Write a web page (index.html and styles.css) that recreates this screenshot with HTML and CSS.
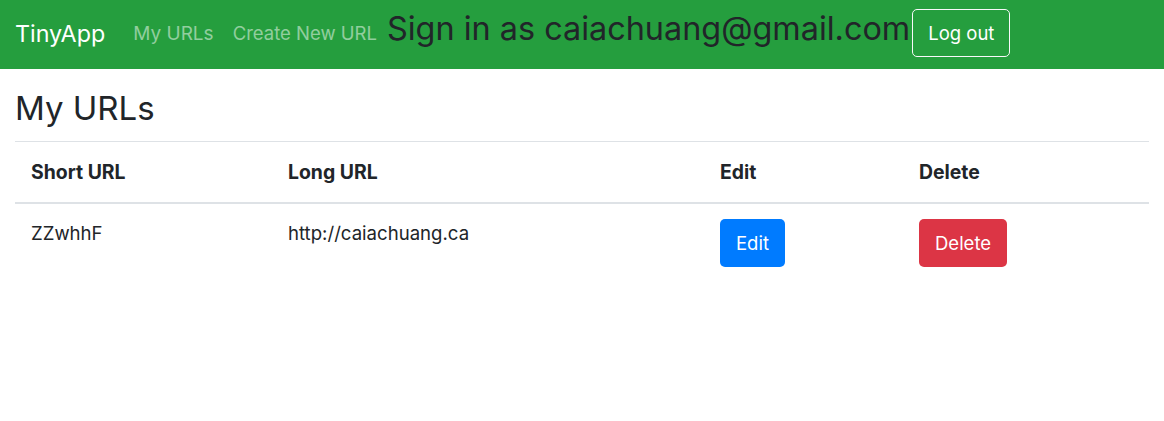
FILE: index.html
```html
<!DOCTYPE html>
<html lang="en">
<head>
<meta charset="utf-8">
<title>TinyApp</title>
<link rel="stylesheet" href="styles.css">
</head>
<body>
<nav class="navbar">
  <a class="brand" href="#">TinyApp</a>
  <a class="nav-link" href="#">My URLs</a>
  <a class="nav-link" href="#">Create New URL</a>
  <h2 class="signin">Sign in as caiachuang@gmail.com</h2>
  <button class="btn-logout">Log out</button>
</nav>
<main class="content">
  <h1 class="title">My URLs</h1>
  <table class="table">
    <thead>
      <tr>
        <th class="c1">Short URL</th>
        <th class="c2">Long URL</th>
        <th class="c3">Edit</th>
        <th class="c4">Delete</th>
      </tr>
    </thead>
    <tbody>
      <tr>
        <td>ZZwhhF</td>
        <td>http://caiachuang.ca</td>
        <td><button class="btn btn-edit">Edit</button></td>
        <td><button class="btn btn-delete">Delete</button></td>
      </tr>
    </tbody>
  </table>
</main>
</body>
</html>
```
FILE: styles.css
```css
* { box-sizing: border-box; }
body {
  margin: 0;
  font-family: Inter, "Liberation Sans", sans-serif;
  color: #212529;
  background: #fff;
}
.navbar {
  display: flex;
  align-items: center;
  padding: 9px 16px 12px;
  background: #259e3e;
}
.brand {
  font-size: 23.3px;
  color: #fff;
  text-decoration: none;
  margin-right: 28px;
  margin-left: -1px;
}
.nav-link {
  font-size: 19px;
  color: rgba(255,255,255,.5);
  text-decoration: none;
  margin-right: 19px;
}
.nav-link + .nav-link { font-size: 18.5px; margin-right: 10px; }
.signin {
  margin: 0 0 8px;
  font-size: 32.4px;
  font-weight: 400;
  color: #212529;
  line-height: 1.2;
}
.btn-logout {
  margin-left: 2px;
  height: 48px;
  padding: 0 15px;
  font-family: inherit;
  font-size: 18.5px;
  color: #fff;
  background: transparent;
  border: 1px solid #f8f9fa;
  border-radius: 5px;
}
.content { padding: 0 15px; }
.title {
  margin: 20px 0 12px;
  font-size: 33px;
  font-weight: 400;
  line-height: 1.2;
}
.table {
  width: 100%;
  border-collapse: collapse;
  font-size: 19px;
}
.table th {
  text-align: left;
  font-weight: 700;
  font-size: 19.4px;
  padding: 12px 16px;
  line-height: 36px;
  border-top: 1px solid #dee2e6;
  border-bottom: 2px solid #dee2e6;
}
.table td {
  padding: 15px 16px;
  line-height: 30px;
  vertical-align: top;
}
.table td:first-child, .table td:nth-child(2) { padding-top: 14px; font-size: 18.6px; }
.c1 { width: 257px; }
.c2 { width: 432px; }
.c3 { width: 199px; }
.btn {
  height: 48px;
  padding: 0 15px;
  font-family: inherit;
  font-size: 18.5px;
  color: #fff;
  border: 1px solid transparent;
  border-radius: 5px;
}
.btn-edit { background: #007bff; }
.btn-delete { background: #dc3545; }
```
